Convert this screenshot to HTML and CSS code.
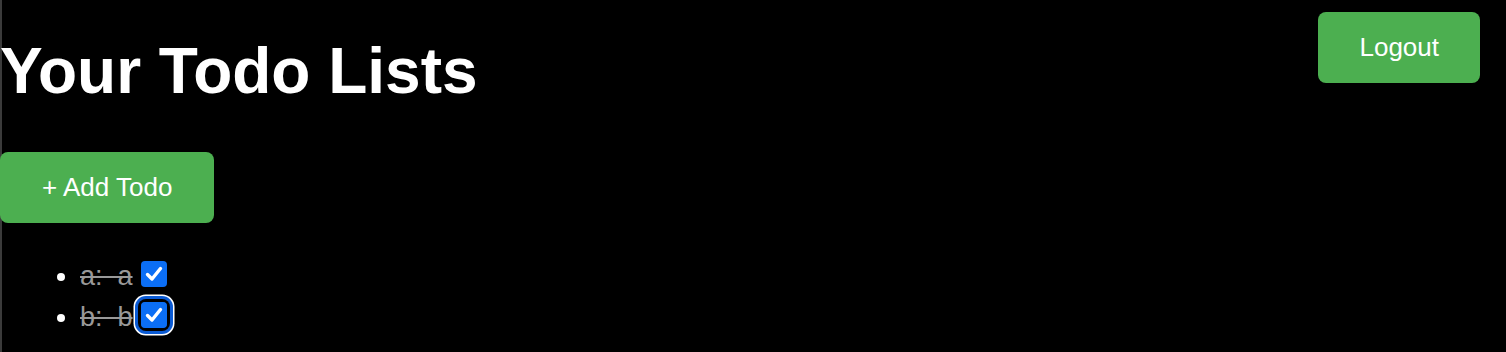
FILE: index.html
```html
<!DOCTYPE html>
<html lang="en">
  <head>
    <meta charset="UTF-8" />
    <meta name="viewport" content="width=device-width, initial-scale=1.0" />
    <title>Your Todo Lists</title>
    <link rel="stylesheet" href="styles.css">
  </head>
  <body>
    <div class="header">
      <h1>Your Todo Lists</h1>
      <button class="btn logout">Logout</button>
    </div>

    <button class="btn add">+ Add Todo</button>

    <ul class="todos">
      <li>
        <span class="done">a:&nbsp; a</span><span class="check">
          <svg viewBox="0 0 26 26" width="26" height="26">
            <rect width="26" height="26" rx="4" fill="#0b6ef5" />
            <path d="M6.5 13.5 L11 18 L19.5 7.5" fill="none" stroke="#fff" stroke-width="3.4" stroke-linecap="round" stroke-linejoin="round" />
          </svg>
        </span>
      </li>
      <li>
        <span class="done">b:&nbsp; b</span><span class="check focused">
          <svg viewBox="0 0 26 26" width="26" height="26">
            <rect width="26" height="26" rx="4" fill="#0b6ef5" />
            <path d="M6.5 13.5 L11 18 L19.5 7.5" fill="none" stroke="#fff" stroke-width="3.4" stroke-linecap="round" stroke-linejoin="round" />
          </svg>
        </span>
      </li>
    </ul>
  </body>
</html>
```

FILE: styles.css
```css
html {
  background: linear-gradient(90deg, #3b3b3b 2px, #000 2px);
}

body {
  margin: 0;
  font-family: 'Liberation Sans', Arial, sans-serif;
  color: #fff;
}

.header {
  display: flex;
  justify-content: space-between;
  align-items: flex-start;
}

h1 {
  font-size: 64px;
  margin: 34px 0 0;
}

.btn {
  background-color: #4caf50;
  color: white;
  font-family: 'Liberation Sans', Arial, sans-serif;
  font-size: 26px;
  padding: 20px 41px;
  border: none;
  border-radius: 8px;
  cursor: pointer;
}

.logout {
  margin: 12px 26px 0 0;
}

.add {
  display: block;
  margin-top: 44px;
  padding: 20px 42px;
}

.todos {
  margin: 33px 0 0;
  padding-left: 80px;
  font-size: 27px;
  line-height: 41px;
}

.done {
  color: #999;
  text-decoration: line-through;
  text-decoration-thickness: 2px;
}

.check {
  display: inline-block;
  width: 26px;
  height: 26px;
  margin-left: 8px;
  vertical-align: -2px;
  border-radius: 4px;
}

.check svg {
  display: block;
}

.focused {
  box-shadow: 0 0 0 3px #000, 0 0 0 6px #0a5ad4, 0 0 0 7.5px #fff;
  border-radius: 5px;
}
```
